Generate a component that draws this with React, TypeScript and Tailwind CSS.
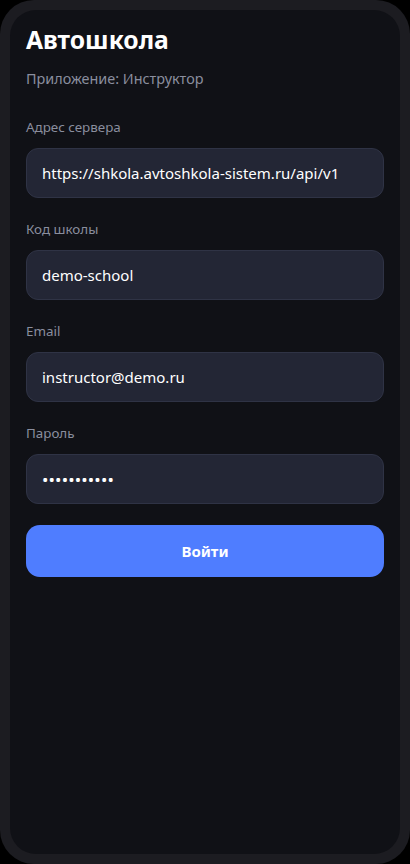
import React from "react";

function Field({ label, value, type = "text" }: { label: string; value: string; type?: string }) {
  const isPwd = type === "password";
  return (
    <div className="flex flex-col">
      <label className="text-[13.4px] leading-[18px] text-[#8a8e9e]">{label}</label>
      <input
        type={type}
        defaultValue={value}
        readOnly
        className={
          isPwd
            ? "mt-[12px] h-[50px] w-full rounded-[12px] border border-[#2f3345] bg-[#232635] px-[15px] text-[17px] tracking-[0.15px] text-white outline-none"
            : "mt-[12px] h-[50px] w-full rounded-[12px] border border-[#2f3345] bg-[#232635] px-[15px] text-[15px] text-white outline-none"
        }
        style={{ fontFamily: "'Noto Sans', 'Open Sans', sans-serif" }}
      />
    </div>
  );
}

export default function App() {
  return (
    <div
      className="h-[864px] w-[410px] bg-black"
      style={{ fontFamily: "'Noto Sans', 'Open Sans', sans-serif" }}
    >
      <div className="h-full w-full rounded-[34px] bg-[#1c1c21] p-[10px]">
        <div className="flex h-full flex-col rounded-[26px] bg-[#101116] px-[16px] pt-[14px]">
          <h1 className="text-[24.7px] font-bold leading-[32px] text-white">Автошкола</h1>
          <p className="mt-[13px] text-[14.4px] leading-[20px] text-[#8a8e9e]">Приложение: Инструктор</p>
          <div className="mt-[29px] flex flex-col gap-[22px]">
            <Field label="Адрес сервера" value="https://shkola.avtoshkola-sistem.ru/api/v1" />
            <Field label="Код школы" value="demo-school" />
            <Field label="Email" value="instructor@demo.ru" />
            <Field label="Пароль" value="password123" type="password" />
          </div>
          <button className="mt-[21px] h-[52px] w-full rounded-[14px] bg-[#4f7dff] text-[15px] font-bold text-white">
            Войти
          </button>
        </div>
      </div>
    </div>
  );
}
